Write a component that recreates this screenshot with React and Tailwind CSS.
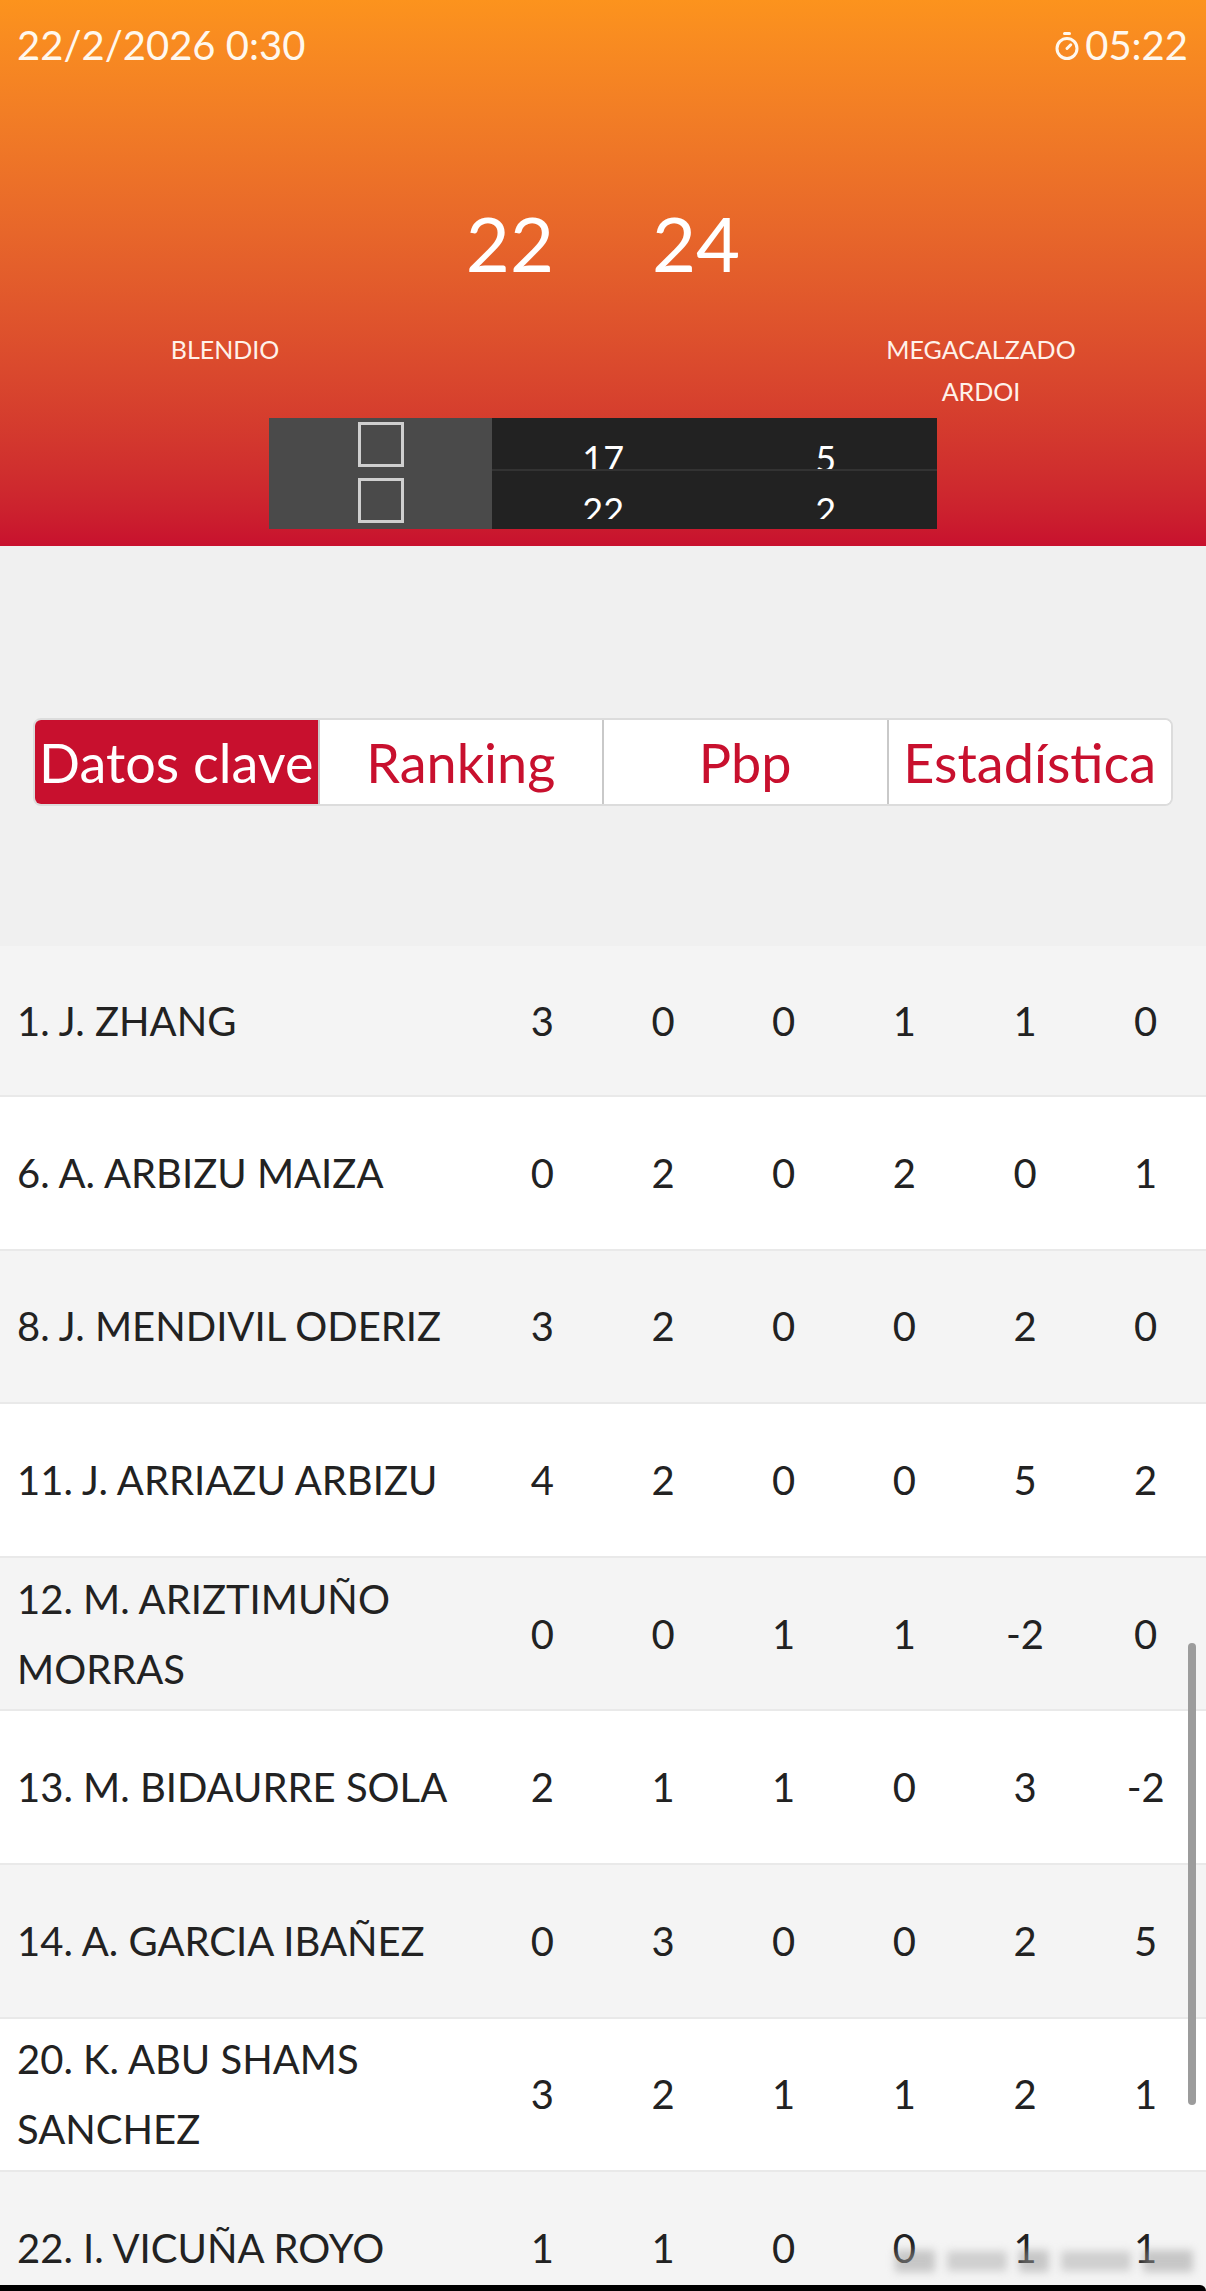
import { Timer } from "lucide-react";

const players = [
  { name: "1. J. ZHANG", stats: ["3", "0", "0", "1", "1", "0"] },
  { name: "6. A. ARBIZU MAIZA", stats: ["0", "2", "0", "2", "0", "1"] },
  { name: "8. J. MENDIVIL ODERIZ", stats: ["3", "2", "0", "0", "2", "0"] },
  { name: "11. J. ARRIAZU ARBIZU", stats: ["4", "2", "0", "0", "5", "2"] },
  { name: "12. M. ARIZTIMUÑO MORRAS", stats: ["0", "0", "1", "1", "-2", "0"] },
  { name: "13. M. BIDAURRE SOLA", stats: ["2", "1", "1", "0", "3", "-2"] },
  { name: "14. A. GARCIA IBAÑEZ", stats: ["0", "3", "0", "0", "2", "5"] },
  { name: "20. K. ABU SHAMS SANCHEZ", stats: ["3", "2", "1", "1", "2", "1"] },
  { name: "22. I. VICUÑA ROYO", stats: ["1", "1", "0", "0", "1", "1"] },
];

const tabs = ["Datos clave", "Ranking", "Pbp", "Estadística"];

function Tofu() {
  return <div className="w-[46px] h-[45px] border-[3px] border-[#cfcfcf]" />;
}

export default function App() {
  return (
    <div
      className="relative h-[2291px] w-[1206px] overflow-hidden bg-[#f0f0f0]"
      style={{ fontFamily: "Lato, 'Open Sans', sans-serif" }}
    >
      {/* Header */}
      <div className="h-[546px] bg-gradient-to-b from-[#fc931d] to-[#c8102e] text-white flex flex-col">
        <div className="mt-[22px] h-[46px] flex items-center justify-between pl-[17px] pr-[18px] text-[40px] leading-[46px] text-[#fff8ee]">
          <span>22/2/2026 0:30</span>
          <span className="flex items-center gap-[3px]">
            <Timer className="w-[30px] h-[30px] mt-[2px]" strokeWidth={2.4} />
            05:22
          </span>
        </div>

        {/* Score */}
        <div className="mt-[137px] h-[76px] flex justify-center gap-[98px] text-[76px] leading-[76px]">
          <span>22</span>
          <span>24</span>
        </div>

        {/* Teams */}
        <div className="mt-[47px] h-[84px] flex justify-between px-[100px] text-[25px] leading-[42px] text-[#fff2ea]">
          <div className="w-[250px] text-center">BLENDIO</div>
          <div className="w-[250px] text-center">MEGACALZADO ARDOI</div>
        </div>

        {/* Quarters */}
        <div className="mt-[6px] mx-auto w-[668px] h-[111px] flex">
          <div className="w-[223px] bg-[#4a4a4a] flex flex-col items-center pt-[4px] gap-[11px]">
            <Tofu />
            <Tofu />
          </div>
          <div className="flex-1 bg-[#222222] flex flex-col">
            <div className="h-[53px] overflow-hidden grid grid-cols-2 text-center text-[36px] leading-[36px] pt-[22px] border-b-2 border-[#333]">
              <span>17</span>
              <span>5</span>
            </div>
            <div className="h-[48px] overflow-hidden grid grid-cols-2 text-center text-[36px] leading-[36px] pt-[21px]">
              <span>22</span>
              <span>2</span>
            </div>
          </div>
        </div>
      </div>

      {/* Tabs */}
      <div className="h-[400px] pt-[172px]">
        <div className="ml-[33px] w-[1140px] h-[88px] flex rounded-[8px] overflow-hidden border-2 border-[#dcdcdc] bg-white">
          {tabs.map((t, i) => (
            <div
              key={t}
              className={
                i === 0
                  ? "flex-1 flex items-center justify-center bg-[#c8102e] text-white text-[54px] whitespace-nowrap"
                  : "flex-1 flex items-center justify-center bg-white text-[#c8102e] text-[54px] whitespace-nowrap border-l-2 border-[#c9c9c9]"
              }
            >
              {t}
            </div>
          ))}
        </div>
      </div>

      {/* Player rows */}
      <div className="flex flex-col">
        {players.map((p, i) => (
          <div
            key={p.name}
            className={
              (i % 2 === 0 ? "bg-[#f4f4f4] " : "bg-white ") +
              (i === 0 ? "h-[151px] " : "h-[153.6px] ") +
              "box-border border-b-2 border-[#e9e9e9] flex items-center text-[40px] text-[#222]"
            }
          >
            <div className="w-[482px] pl-[17px] pr-[12px] leading-[70px]">{p.name}</div>
            <div className="flex-1 flex">
              {p.stats.map((s, j) => (
                <div key={j} className="flex-1 text-center">
                  {s}
                </div>
              ))}
            </div>
          </div>
        ))}
      </div>

      {/* Scrollbar */}
      <div className="absolute right-[10px] top-[1643px] w-[8px] h-[462px] rounded-full bg-[#9c9c9c]" />

      {/* Blurred watermark */}
      <div className="absolute left-[895px] top-[2250px] flex gap-[12px] items-center blur-[4px] opacity-50">
        <div className="w-[40px] h-[22px] bg-[#9a9a9a]" />
        <div className="w-[60px] h-[20px] bg-[#aaa]" />
        <div className="w-[30px] h-[22px] bg-[#9a9a9a]" />
        <div className="w-[70px] h-[20px] bg-[#aaa]" />
        <div className="w-[50px] h-[22px] bg-[#9a9a9a]" />
      </div>

      {/* Bottom edge */}
      <div className="absolute left-0 right-0 bottom-0 h-[6px] bg-black rounded-tr-[10px]" />
    </div>
  );
}
